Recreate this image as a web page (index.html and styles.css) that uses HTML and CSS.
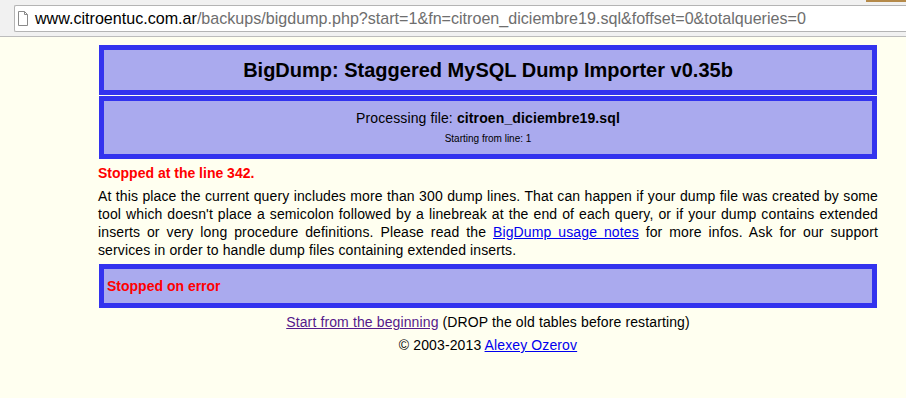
FILE: index.html
```html
<!DOCTYPE html>
<html lang="en">
<head>
    <meta charset="UTF-8">
    <title>BigDump ver. 0.35b from 2013-09-05</title>
    <link rel="stylesheet" href="styles.css">
</head>
<body>
    <div class="chrome">
        <div class="chrome-top"><span class="ext"></span></div>
        <div class="omnibox">
            <svg class="page-icon" width="12" height="15" viewBox="0 0 12 15">
                <path d="M1.5 0.5 H7.5 L10.5 3.5 V14.5 H1.5 Z" fill="#fff" stroke="#8a8a8a"/>
                <path d="M7.5 0.5 V3.5 H10.5" fill="none" stroke="#8a8a8a"/>
            </svg>
            <span class="host">www.citroentuc.com.ar</span><span class="path">/backups/bigdump.php?start=1&amp;fn=citroen_diciembre19.sql&amp;foffset=0&amp;totalqueries=0</span>
        </div>
    </div>
    <div class="page">
        <div class="main">
            <div class="skin1">
                <h1>BigDump: Staggered MySQL Dump Importer v0.35b</h1>
            </div>
            <div class="skin1">
                <p class="centr">Processing file: <b>citroen_diciembre19.sql</b></p>
                <p class="smlcentr">Starting from line: 1</p>
            </div>
            <p class="error">Stopped at the line 342.</p>
            <p>At this place the current query includes more than 300 dump lines. That can happen if your dump file was created by some tool which doesn't place a semicolon followed by a linebreak at the end of each query, or if your dump contains extended inserts or very long procedure definitions. Please read the <a href="#">BigDump usage notes</a> for more infos. Ask for our support services in order to handle dump files containing extended inserts.</p>
            <div class="skin1">
                <p class="error">Stopped on error</p>
            </div>
            <p class="centr"><a class="visited" href="#">Start from the beginning</a> (DROP the old tables before restarting)</p>
            <p class="centr">&copy; 2003-2013 <a href="#">Alexey Ozerov</a></p>
        </div>
    </div>
</body>
</html>
```
FILE: styles.css
```css
body {
    margin: 0;
    background-color: #FFFFF0;
}
.chrome {
    height: 36px;
    background: #f1f1f1;
    border-bottom: 1px solid #bcbcbc;
}
.chrome-top {
    height: 5px;
    display: flex;
    justify-content: flex-end;
}
.ext {
    width: 40px;
    height: 2px;
    background: #b58a4a;
}
.omnibox {
    margin-left: 14px;
    height: 25px;
    background: #fff;
    border: 1px solid #b4b4b4;
    border-right: none;
    border-radius: 2px 0 0 2px;
    display: flex;
    align-items: center;
    font-family: "Liberation Sans", Arial, sans-serif;
    font-size: 16.1px;
    white-space: nowrap;
}
.page-icon {
    margin: 0 6px 0 2px;
}
.host {
    color: #000;
}
.path {
    color: #6e6e6e;
}
.page {
    margin: 8px 8px 8px 98px;
}
.main {
    width: 780px;
}
h1 {
    font-size: 20px;
    line-height: 24px;
    font-family: "Liberation Sans", Arial, Helvetica, sans-serif;
    margin-top: 5px;
    margin-bottom: 5px;
}
p {
    font-size: 14px;
    line-height: 18px;
    font-family: "Liberation Sans", Arial, Helvetica, sans-serif;
    letter-spacing: 0.12px;
    margin-top: 5px;
    margin-bottom: 5px;
    text-align: justify;
}
p.centr {
    text-align: center;
}
p.smlcentr {
    font-size: 10px;
    line-height: 14px;
    letter-spacing: 0;
    text-align: center;
}
p.error {
    color: #FF0000;
    font-weight: bold;
    letter-spacing: 0;
    text-align: left;
}
a {
    color: #0000EE;
}
a.visited {
    color: #551A8B;
}
.skin1 {
    border: 5px solid #3333EE;
    background-color: #AAAAEE;
    text-align: center;
    padding: 3px;
    margin: 1px;
}
```
